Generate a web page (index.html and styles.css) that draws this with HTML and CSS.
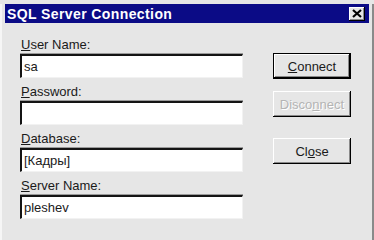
FILE: index.html
```html
<!DOCTYPE html>
<html lang="en">
<head>
    <meta charset="UTF-8">
    <title>SQL Server Connection</title>
    <link rel="stylesheet" href="styles.css">
</head>
<body>
    <div class="window">
        <div class="titlebar">
            <span class="title">SQL Server Connection</span>
            <span class="close">
                <svg width="10" height="9" viewBox="0 0 10 9">
                    <path d="M1 1 L9 8 M9 1 L1 8" stroke="#000" stroke-width="2.2" fill="none"/>
                </svg>
            </span>
        </div>

        <div class="content">
            <div class="fields">
                <div class="field">
                    <label><u>U</u>ser Name:</label>
                    <div class="input">sa</div>
                </div>
                <div class="field">
                    <label><u>P</u>assword:</label>
                    <div class="input"></div>
                </div>
                <div class="field">
                    <label><u>D</u>atabase:</label>
                    <div class="input">[Кадры]</div>
                </div>
                <div class="field">
                    <label><u>S</u>erver Name:</label>
                    <div class="input">pleshev</div>
                </div>
            </div>

            <div class="buttons">
                <button class="btn default"><u>C</u>onnect</button>
                <button class="btn disabled">Disco<u>n</u>nect</button>
                <button class="btn close-btn">Cl<u>o</u>se</button>
            </div>
        </div>
    </div>
</body>
</html>
```

FILE: styles.css
```css
body {
    margin: 0;
    background: #e6e6e6;
    font-family: "Liberation Sans", Arial, sans-serif;
    overflow: hidden;
}

.window {
    width: 370px;
    height: 240px;
    background: #e6e6e6;
    border-left: 2px solid #f6f6f6;
    border-right: 2px solid #8a8a8a;
}

.titlebar {
    margin: 4px 3px 0 3px;
    height: 19px;
    background: #0b0b86;
    display: flex;
    align-items: center;
    justify-content: space-between;
    padding: 0 4px 0 2px;
}

.title {
    color: #ffffff;
    font-weight: bold;
    font-size: 14px;
    letter-spacing: 0.4px;
}

.close {
    width: 16px;
    height: 14px;
    background: #e6e6e6;
    display: flex;
    align-items: center;
    justify-content: center;
    box-shadow: inset -1px -1px 0 #000, inset 1px 1px 0 #fff, inset -2px -2px 0 #8a8a8a;
}

.content {
    display: flex;
    padding-top: 14px;
}

.fields {
    margin-left: 18px;
    width: 223px;
}

.field {
    margin-bottom: 6px;
}

.field label {
    display: block;
    font-size: 13px;
    line-height: 16px;
    padding-left: 1px;
    margin-bottom: 1px;
    color: #1a1a1a;
}

.input {
    height: 21px;
    background: #fff;
    border-top: 2px solid #141414;
    border-left: 2px solid #141414;
    border-right: 1px solid #f2f2f2;
    border-bottom: 1px solid #f2f2f2;
    box-shadow: 0 -1px 0 #9a9a9a;
    font-size: 13px;
    line-height: 21px;
    padding-left: 2px;
    color: #1a1a1a;
}

.buttons {
    margin-left: 30px;
    padding-top: 16px;
    display: flex;
    flex-direction: column;
}

.btn {
    width: 78px;
    height: 26px;
    padding: 0;
    background: #e6e6e6;
    border: none;
    font-family: "Liberation Sans", Arial, sans-serif;
    font-size: 13px;
    color: #1a1a1a;
    box-shadow: inset -1px -1px 0 #000, inset 1px 1px 0 #fff, inset -2px -2px 0 #8a8a8a;
}

.btn.default {
    box-shadow: inset 0 0 0 1px #000, inset -2px -2px 0 #000, inset 2px 2px 0 #fff, inset -3px -3px 0 #8a8a8a;
}

.btn.disabled {
    margin-top: 12px;
    color: #b4b4b4;
    text-shadow: 1px 1px 0 #fff;
}

.close-btn {
    margin-top: 21px;
}
```
